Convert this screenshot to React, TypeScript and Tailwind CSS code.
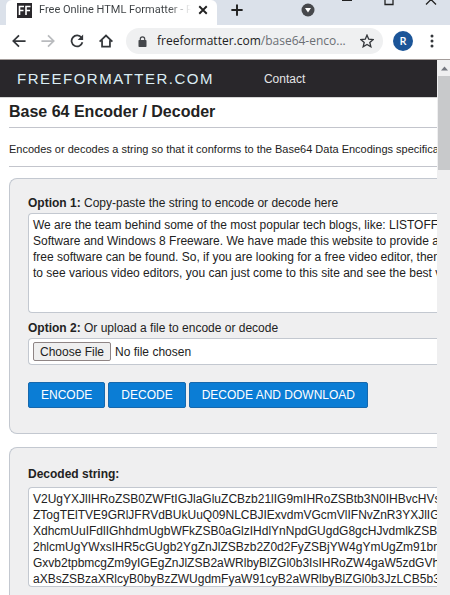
import type { ReactNode } from "react";

const sourceText = `We are the team behind some of the most popular tech blogs, like: LISTOFFREEWARE.COM, I LoveFree
Software and Windows 8 Freeware. We have made this website to provide a common place, where all type of
free software can be found. So, if you are looking for a free video editor, then instead of going to multiple sites
to see various video editors, you can just come to this site and see the best video editors.`;

const decodedText = `V2UgYXJlIHRoZSB0ZWFtIGJlaGluZCBzb21lIG9mIHRoZSBtb3N0IHBvcHVsYXIgdGVjaCBibG9ncywgbGlr
ZTogTElTVE9GRlJFRVdBUkUuQ09NLCBJIExvdmVGcmVlIFNvZnR3YXJlIGFuZCBXaW5kb3dzIDggRnJlZ
XdhcmUuIFdlIGhhdmUgbWFkZSB0aGlzIHdlYnNpdGUgdG8gcHJvdmlkZSBhIGNvbW1vbiBwbGFjZSwgd
2hlcmUgYWxsIHR5cGUgb2YgZnJlZSBzb2Z0d2FyZSBjYW4gYmUgZm91bmQuIFNvLCBpZiB5b3UgYXJlI
Gxvb2tpbmcgZm9yIGEgZnJlZSB2aWRlbyBlZGl0b3IsIHRoZW4gaW5zdGVhZCBvZiBnb2luZyB0byBtdWx0
aXBsZSBzaXRlcyB0byBzZWUgdmFyaW91cyB2aWRlbyBlZGl0b3JzLCB5b3UgY2FuIGp1c3QgY29tZSB0by`;

const textareaClass =
  "block w-full resize-none overflow-hidden whitespace-pre rounded-l-sm border border-r-0 border-[#c3c8d0] bg-white px-1 py-[3px] text-xs leading-4 text-[#222] outline-none";

function Stroke({ size, width = 2, children }: { size: number; width?: number; children: ReactNode }) {
  return (
    <svg width={size} height={size} viewBox="0 0 16 16" fill="none" stroke="currentColor" strokeWidth={width} aria-hidden="true">
      {children}
    </svg>
  );
}

function TabStrip() {
  return (
    <div className="flex h-[25px] items-start bg-[#dbe1ea]">
      <div className="ml-[6px] flex h-full w-[211px] items-center gap-[7px] rounded-t-md bg-white pb-[5px] pl-[11px] pr-[9px]">
        <svg width="15" height="15" viewBox="0 0 15 15" className="shrink-0" aria-hidden="true">
          <rect width="15" height="15" fill="#29272b" />
          <path d="M2.5 12V3.5H7M2.5 7.5H6.5M9 12V3.5H13.5M9 7.5H13" fill="none" stroke="#fff" strokeWidth="1.6" />
        </svg>
        <span className="min-w-0 flex-1 overflow-hidden whitespace-nowrap bg-linear-to-r from-[#3c4043] from-85% to-transparent bg-clip-text font-[Roboto,sans-serif] text-[11px] leading-4 text-transparent">
          Free Online HTML Formatter - F
        </span>
        <button aria-label="Close tab" className="shrink-0 text-[#222]">
          <Stroke size={10}>
            <path d="M2 2l12 12M14 2L2 14" strokeWidth="3" />
          </Stroke>
        </button>
      </div>
      <button aria-label="New tab" className="ml-[14px] mt-[4px] text-[#222]">
        <Stroke size={12}>
          <path d="M8 0.500v15M0.500 8h15" strokeWidth="2.600" />
        </Stroke>
      </button>
      <button aria-label="Search tabs" className="ml-[58px] mt-[3px]">
        <svg width="14" height="14" viewBox="0 0 14 14" aria-hidden="true">
          <circle cx="7" cy="7" r="6.500" fill="#46484c" />
          <path d="M4 5h6l-3 4.500z" fill="#fff" />
        </svg>
      </button>
      <div className="ml-auto mr-[13px] flex gap-[30px] text-[#222]">
        <button aria-label="Minimize">
          <svg width="12" height="6" viewBox="0 0 12 6" aria-hidden="true">
            <path d="M1 0.500h10" stroke="currentColor" />
          </svg>
        </button>
        <button aria-label="Maximize">
          <svg width="12" height="6" viewBox="0 0 12 6" aria-hidden="true">
            <path d="M2 -4v8.500h8v-8.500" fill="none" stroke="currentColor" strokeWidth="1.300" />
          </svg>
        </button>
        <button aria-label="Close window">
          <svg width="12" height="6" viewBox="0 0 12 6" aria-hidden="true">
            <path d="M1 4.500L6 -0.500L11 4.500" fill="none" stroke="currentColor" strokeWidth="1.300" />
          </svg>
        </button>
      </div>
    </div>
  );
}

function Toolbar() {
  return (
    <div className="flex h-[35px] items-center border-b border-[#a39c9a] bg-white pb-[2px] pl-[12px] pr-[16px] text-[#33363a]">
      <div className="flex shrink-0 gap-[15px]">
        <button aria-label="Back">
          <Stroke size={14}>
            <path d="M15.500 8H2M8 1.500L1.500 8L8 14.500" />
          </Stroke>
        </button>
        <button aria-label="Forward" className="text-[#b9bbbe]">
          <Stroke size={14}>
            <path d="M0.500 8H14M8 1.500L14.500 8L8 14.500" />
          </Stroke>
        </button>
        <button aria-label="Reload">
          <Stroke size={14}>
            <path d="M13.200 4.200A6.300 6.300 0 1 0 14.200 9.500" />
            <path d="M15 0.500V6.800H8.700z" fill="currentColor" stroke="none" />
          </Stroke>
        </button>
        <button aria-label="Home">
          <Stroke size={14}>
            <path d="M0.700 8.700L8 1.800L15.300 8.700M3.500 7V14.500H12.500V7" />
          </Stroke>
        </button>
      </div>
      <div className="ml-[13px] flex h-[26px] min-w-0 flex-1 items-center rounded-full bg-[#eff0f1] pl-[12px] pr-[9px]">
        <svg width="9" height="11" viewBox="0 0 9 11" className="shrink-0" aria-hidden="true">
          <rect x="0.500" y="4" width="8" height="7" rx="0.800" fill="#44474b" />
          <path d="M2.300 4.500V3a2.200 2.200 0 0 1 4.400 0V4.500" fill="none" stroke="#44474b" strokeWidth="1.200" />
        </svg>
        <div className="ml-[10px] min-w-0 flex-1 overflow-hidden whitespace-nowrap text-xs leading-5 text-[#6b6f74]">
          <span className="text-[#222]">freeformatter.com</span>/base64-enco...
        </div>
        <button aria-label="Bookmark this tab" className="shrink-0">
          <Stroke size={14} width={1.5}>
            <path d="M8 1.300L10 6L15 6.400L11.200 9.700L12.400 14.600L8 12L3.600 14.600L4.800 9.700L1 6.400L6 6z" />
          </Stroke>
        </button>
      </div>
      <button aria-label="Profile" className="ml-[10px] size-5 shrink-0 rounded-full bg-[#1b5598] text-[11px] leading-5 font-semibold text-white">
        R
      </button>
      <button aria-label="Menu" className="ml-[17px] shrink-0">
        <svg width="4" height="14" viewBox="0 0 4 14" fill="currentColor" aria-hidden="true">
          <circle cx="2" cy="2" r="1.500" />
          <circle cx="2" cy="7" r="1.500" />
          <circle cx="2" cy="12" r="1.500" />
        </svg>
      </button>
    </div>
  );
}

function ActionButton({ children }: { children: ReactNode }) {
  return (
    <button className="h-[26px] shrink-0 rounded-xs border border-[#1668ad] bg-[#0b7dd5] px-3 text-xs text-white">
      {children}
    </button>
  );
}

function Scrollbar() {
  return (
    <div className="flex w-[13px] shrink-0 flex-col bg-[#efeff0] pl-px">
      <div className="flex h-4 items-center justify-center">
        <svg width="7" height="5" viewBox="0 0 7 5" aria-hidden="true">
          <path d="M0 4.500L3.500 0.500L7 4.500z" fill="#74777f" />
        </svg>
      </div>
      <div className="h-[94px] bg-[#c8c9cb]" />
    </div>
  );
}

export default function App() {
  return (
    <div className="flex h-screen flex-col overflow-hidden bg-white font-['Open_Sans',sans-serif]">
      <TabStrip />
      <Toolbar />
      <div className="flex min-h-0 flex-1">
        <div className="min-w-0 flex-1 overflow-hidden font-['Liberation_Sans',Arial,sans-serif] text-xs text-[#222]">
          <header className="flex h-[38px] items-center border-b border-[#d5d5d5] bg-[#29272b] pl-[17px]">
            <a href="#" className="text-[15px] tracking-widest text-[#dceef5]">FREEFORMATTER.COM</a>
            <a href="#" className="ml-[50px] text-xs text-[#e4e4e6]">Contact</a>
          </header>

          <main className="pl-[9px]">
            <h1 className="border-b border-[#c3c5cc] pt-[3px] pb-[4px] text-base leading-[22px] font-bold">
              Base 64 Encoder / Decoder
            </h1>
            <p className="overflow-hidden whitespace-nowrap border-b border-[#c3c5cc] pt-[13px] pb-[9px] text-[11px] leading-4">
              Encodes or decodes a string so that it conforms to the Base64 Data Encodings specificat
            </p>

            <form className="mt-[11px] rounded-l-lg border border-r-0 border-[#c3c8d0] bg-[#efeff0] pt-[15px] pb-[25px] pl-[18px]">
              <label htmlFor="source" className="mb-px block leading-[18px]">
                <b>Option 1:</b> Copy-paste the string to encode or decode here
              </label>
              <textarea id="source" wrap="off" className={`${textareaClass} h-[100px]`} defaultValue={sourceText} />
              <label htmlFor="upload" className="mt-[6px] block leading-[18px]">
                <b>Option 2:</b> Or upload a file to encode or decode
              </label>
              <input
                id="upload"
                type="file"
                className="mt-px block h-[27px] w-full rounded-l-sm border border-r-0 border-[#c3c8d0] bg-white px-1 py-[3px] text-xs file:h-[19px] file:rounded-xs file:border file:border-solid file:border-[#8f8585] file:bg-[#efefef] file:px-[6px] file:font-medium file:text-[#222]"
              />
              <div className="mt-[17px] flex gap-[3px]">
                <ActionButton>ENCODE</ActionButton>
                <ActionButton>DECODE</ActionButton>
                <ActionButton>DECODE AND DOWNLOAD</ActionButton>
              </div>
            </form>

            <section className="mt-[13px] rounded-l-lg border border-r-0 border-[#c3c8d0] bg-[#efeff0] pt-[17px] pb-6 pl-[18px]">
              <label htmlFor="result" className="mb-[4px] block leading-[18px] font-bold">
                Decoded string:
              </label>
              <textarea id="result" readOnly wrap="off" className={`${textareaClass} h-[100px]`} defaultValue={decodedText} />
            </section>
          </main>
        </div>
        <Scrollbar />
      </div>
    </div>
  );
}
